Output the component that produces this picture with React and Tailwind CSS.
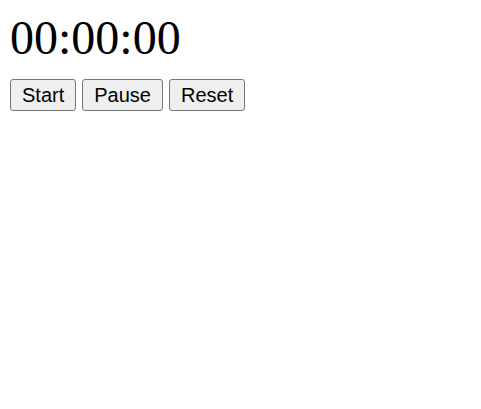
import { useEffect, useRef, useState } from "react";

function pad(n) {
  return String(n).padStart(2, "0");
}

function App() {
  const [seconds, setSeconds] = useState(0);
  const [running, setRunning] = useState(false);
  const timer = useRef(null);

  useEffect(() => {
    if (running) {
      timer.current = setInterval(() => setSeconds((s) => s + 1), 1000);
    }
    return () => clearInterval(timer.current);
  }, [running]);

  const h = Math.floor(seconds / 3600);
  const m = Math.floor((seconds % 3600) / 60);
  const s = seconds % 60;

  const btn =
    "px-[11px] py-[3px] text-[20px] leading-[24px] font-['Liberation_Sans',Arial,sans-serif] text-black bg-[#efefef] border border-[#767676] rounded-[3px] hover:bg-[#e5e5e5]";

  return (
    <div className="min-h-screen bg-white px-[10px] pt-[10px]">
      <h1 className="text-[48px] leading-[55px] font-['Liberation_Serif','Times_New_Roman',serif] text-black">
        {pad(h)}:{pad(m)}:{pad(s)}
      </h1>
      <div className="flex gap-[6px] mt-[14px]">
        <button className={btn} onClick={() => setRunning(true)}>
          Start
        </button>
        <button className={btn} onClick={() => setRunning(false)}>
          Pause
        </button>
        <button
          className={btn}
          onClick={() => {
            setRunning(false);
            setSeconds(0);
          }}
        >
          Reset
        </button>
      </div>
    </div>
  );
}

export default App;
